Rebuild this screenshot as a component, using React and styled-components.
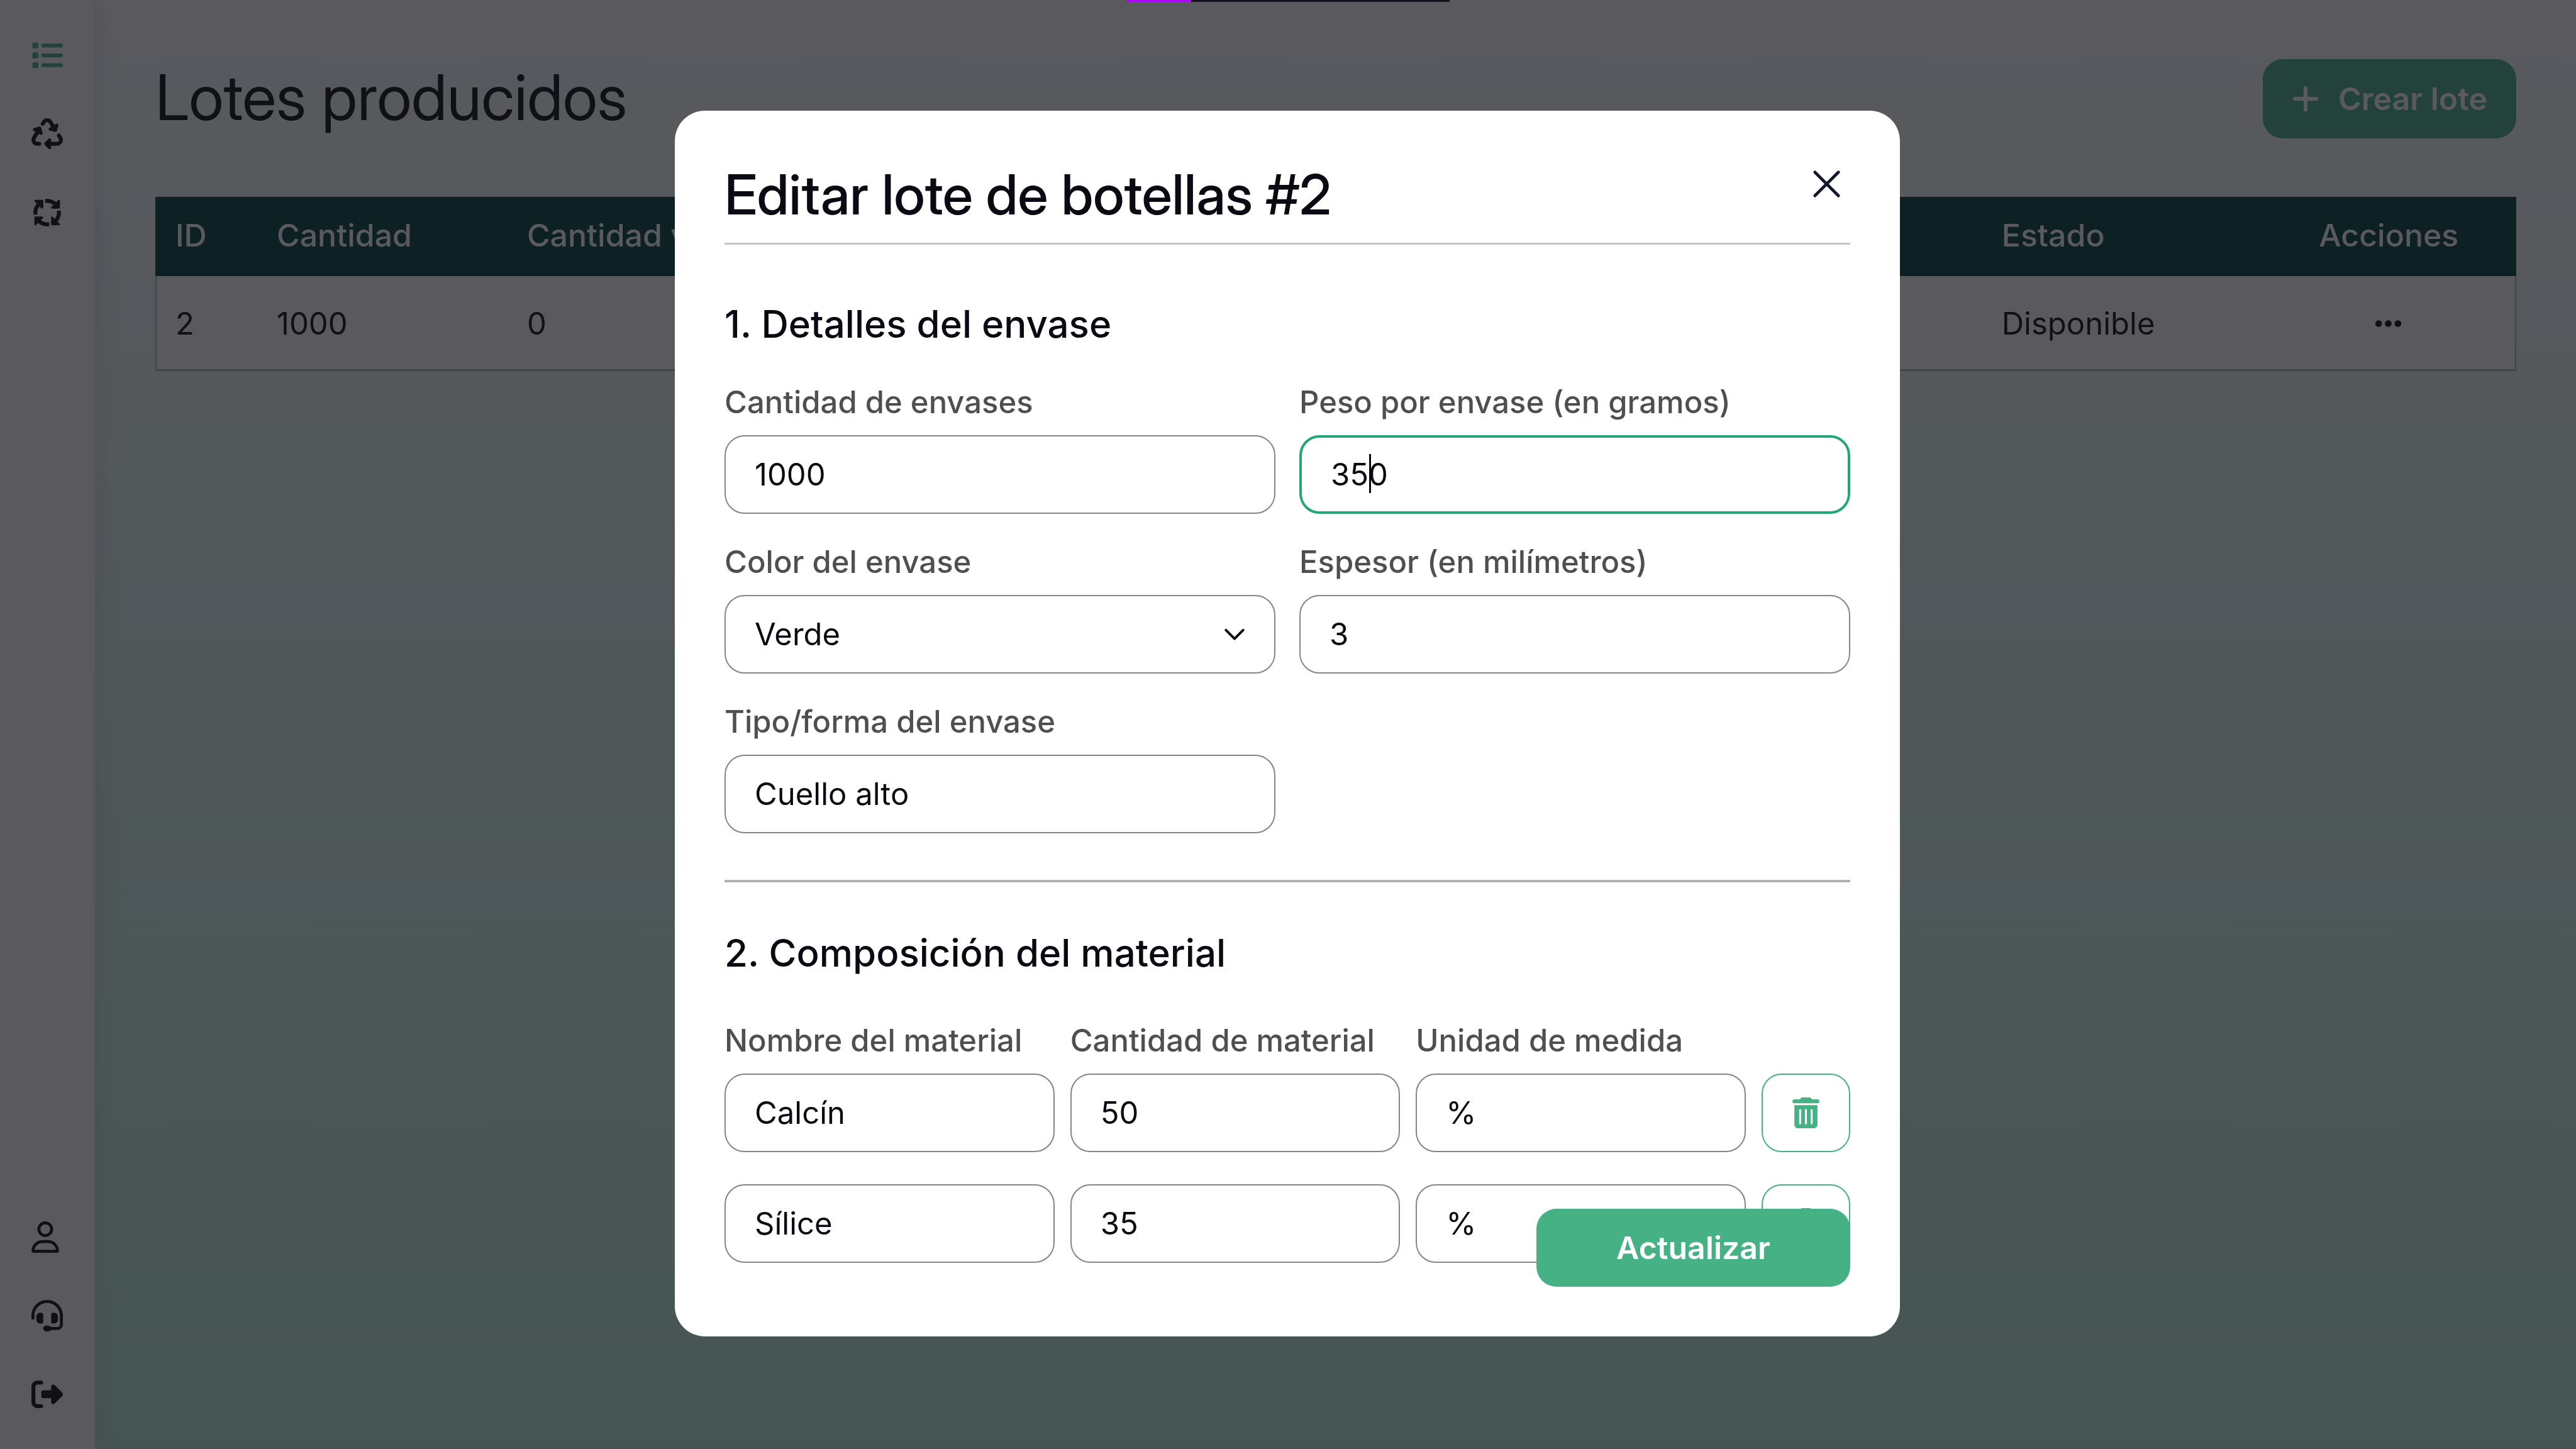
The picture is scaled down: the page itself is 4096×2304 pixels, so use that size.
import React from "react";
import styled, { createGlobalStyle } from "styled-components";
import {
  FaList,
  FaRecycle,
  FaArrowsSpin,
  FaRegUser,
  FaHeadset,
  FaRightFromBracket,
  FaTrashCan,
  FaPlus,
  FaEllipsis,
} from "react-icons/fa6";

const color = {
  ink: "#0b0a12",
  label: "#4f4f4f",
  green: "#47b186",
  focus: "#22a672",
  deep: "#02413b",
  line: "#858585",
  white: "#ffffff",
};

const displayFont = `"Inter Display", Inter, "Liberation Sans", sans-serif`;

const GlobalStyle = createGlobalStyle`
  *, *::before, *::after { box-sizing: border-box; }
  body {
    margin: 0;
    font-family: Inter, "Liberation Sans", sans-serif;
    font-size: 49px;
    line-height: 62px;
    color: ${color.ink};
  }
  button, input, select { font: inherit; color: inherit; margin: 0; }
  h1, h2, h3 { margin: 0; }
`;

const Page = styled.div`
  display: flex;
  min-height: 100vh;
  background: linear-gradient(180deg, #ffffff 0%, #c0f1dc 100%);
`;

const Sidebar = styled.nav`
  display: flex;
  flex-direction: column;
  justify-content: space-between;
  flex: none;
  width: 151px;
  padding: 63px 0 62px 50px;
  background: ${color.white};
  border-right: 2px solid #f6f6f8;
  box-shadow: 0 0 40px rgba(2, 65, 58, 0.12);
`;

const NavGroup = styled.div`
  display: flex;
  flex-direction: column;
  gap: 75px;
`;

const NavLink = styled.a`
  display: flex;
  color: ${(p) => (p.$active ? color.green : color.ink)};

  svg {
    flex: none;
    width: ${(p) => (p.$narrow ? "44px" : "50px")};
    height: 50px;
  }
`;

const Main = styled.main`
  flex: 1;
  min-width: 0;
  padding: 94px 95px 94px 96px;
`;

const PageHeader = styled.header`
  display: flex;
  align-items: center;
  justify-content: space-between;
  margin-bottom: 93px;
`;

const PageTitle = styled.h1`
  padding-bottom: 4px;
  font-family: ${displayFont};
  font-size: 100px;
  line-height: 112px;
  font-weight: 400;
`;

const Button = styled.button`
  display: flex;
  align-items: center;
  justify-content: center;
  gap: 30px;
  height: ${(p) => (p.$large ? "124px" : "126px")};
  width: ${(p) => (p.$large ? "499px" : "auto")};
  padding: 0 46px;
  border: 0;
  border-radius: 32px;
  background: ${color.green};
  color: ${color.white};
  font-size: 50px;
  font-weight: 600;

  svg {
    width: 44px;
    height: 50px;
  }
`;

const Table = styled.table`
  width: 100%;
  table-layout: fixed;
  border-spacing: 0;
`;

const HeadCell = styled.th`
  width: ${(p) => p.$width || "auto"};
  height: 126px;
  padding: 0 32px 4px;
  background: ${color.deep};
  color: ${color.white};
  font-size: 50px;
  font-weight: 500;
  text-align: ${(p) => (p.$center ? "center" : "left")};
  white-space: nowrap;
`;

const Cell = styled.td`
  height: 151px;
  padding: 3px 32px 0;
  background: ${color.white};
  border-bottom: 3px solid #b5b5b5;

  &:first-child { border-left: 2px solid #b5b5b5; padding-left: 30px; }
  &:last-child { border-right: 2px solid #b5b5b5; }
`;

const MoreButton = styled.button`
  display: flex;
  margin: 0 auto;
  padding: 0;
  border: 0;
  background: none;
`;

const Overlay = styled.div`
  position: fixed;
  inset: 0;
  display: flex;
  justify-content: center;
  align-items: center;
  padding: 0 2px 3px 0;
  background: rgba(19, 18, 25, 0.7);
`;

const Progress = styled.div`
  position: fixed;
  top: 0;
  left: 50%;
  display: flex;
  width: 514px;
  height: 3px;
  margin-left: -257px;
  background: #15101c;
`;

const ProgressValue = styled.div`
  width: 20%;
  background: #ae00ff;
`;

const Dialog = styled.form`
  position: relative;
  display: flex;
  flex-direction: column;
  width: 1948px;
  height: 1949px;
  max-width: 94vw;
  max-height: 94vh;
  padding: 79px;
  border-radius: 48px;
  background: ${color.white};
`;

const DialogHeader = styled.header`
  display: flex;
  flex: none;
  align-items: flex-start;
  justify-content: space-between;
  padding-bottom: 23px;
  border-bottom: 3px solid #c2c2c2;
`;

const DialogTitle = styled.h2`
  font-family: ${displayFont};
  font-size: 88px;
  line-height: 108px;
  font-weight: 500;
`;

const CloseButton = styled.button`
  display: flex;
  padding: 0;
  border: 0;
  background: none;
  color: #0f172a;

  svg { width: 75px; height: 75px; }
`;

const DialogBody = styled.div`
  flex: 1;
  min-height: 0;
  overflow: hidden;
`;

const Section = styled.section`
  padding: ${(p) => (p.$first ? "88px" : "74px")} 0 74px;
  border-bottom: ${(p) => (p.$first ? "4px solid #b2b2b2" : "0")};
`;

const SectionTitle = styled.h3`
  margin-bottom: ${(p) => (p.$wide ? "70px" : "55px")};
  font-size: 60px;
  line-height: 76px;
  font-weight: 500;
`;

const FieldGrid = styled.div`
  display: grid;
  grid-template-columns: 1fr 1fr;
  gap: 45px 38px;
`;

const MaterialGrid = styled.div`
  display: grid;
  grid-template-columns: 1fr 1fr 1fr 141px;
  align-items: end;
  gap: 51px 25px;
`;

const Field = styled.div`
  display: flex;
  flex-direction: column;
  gap: 20px;
  min-width: 0;
`;

const Label = styled.label`
  color: ${color.label};
  line-height: 64px;
  font-weight: 500;
  white-space: nowrap;
`;

const Control = styled.div`
  position: relative;
  display: grid;
`;

const Input = styled.input`
  width: 100%;
  height: 125px;
  padding: 0 46px;
  border: ${(p) => (p.$focused ? `4px solid ${color.focus}` : `2px solid ${color.line}`)};
  border-radius: 32px;
  outline: none;
  background: ${color.white};
`;

const Select = styled.select`
  width: 100%;
  height: 125px;
  padding: 0 46px;
  border: 2px solid ${color.line};
  border-radius: 32px;
  appearance: none;
  background: ${color.white};
`;

const Chevron = styled.svg`
  position: absolute;
  top: 50%;
  right: 44px;
  width: 42px;
  height: 42px;
  margin-top: -21px;
  pointer-events: none;
`;

const Caret = styled.span`
  position: absolute;
  top: 30px;
  left: 111px;
  width: 3px;
  height: 62px;
  background: ${color.ink};
`;

const DeleteButton = styled.button`
  display: flex;
  align-items: center;
  justify-content: center;
  height: 125px;
  padding: 0;
  border: 2px solid ${color.green};
  border-radius: 32px;
  background: ${color.white};
  color: ${color.green};
`;

const SubmitBar = styled.div`
  position: absolute;
  right: 79px;
  bottom: 79px;
`;

const mainLinks = [
  { name: "Lotes", icon: FaList, active: true },
  { name: "Reciclaje", icon: FaRecycle },
  { name: "Procesos", icon: FaArrowsSpin },
];

const accountLinks = [
  { name: "Perfil", icon: FaRegUser, narrow: true },
  { name: "Soporte", icon: FaHeadset },
  { name: "Salir", icon: FaRightFromBracket },
];

const materials = [
  { name: "Calcín", amount: "50", unit: "%" },
  { name: "Sílice", amount: "35", unit: "%" },
];

const materialFields = [
  { key: "name", label: "Nombre del material" },
  { key: "amount", label: "Cantidad de material" },
  { key: "unit", label: "Unidad de medida" },
];

function NavLinks({ links }) {
  return (
    <NavGroup>
      {links.map(({ name, icon: Icon, active, narrow }) => (
        <NavLink key={name} href="#" aria-label={name} $active={active} $narrow={narrow}>
          <Icon />
        </NavLink>
      ))}
    </NavGroup>
  );
}

function TextField({ id, label, value, focused }) {
  return (
    <Field>
      <Label htmlFor={id}>{label}</Label>
      <Control>
        <Input id={id} defaultValue={value} $focused={focused} />
        {focused && <Caret />}
      </Control>
    </Field>
  );
}

function LotsTable() {
  return (
    <Table>
      <thead>
        <tr>
          <HeadCell $width="4.29%">ID</HeadCell>
          <HeadCell $width="10.6%">Cantidad</HeadCell>
          <HeadCell>Cantidad vendida</HeadCell>
          <HeadCell $width="11.85%">Estado</HeadCell>
          <HeadCell $width="10.8%" $center>Acciones</HeadCell>
        </tr>
      </thead>
      <tbody>
        <tr>
          <Cell>2</Cell>
          <Cell>1000</Cell>
          <Cell>0</Cell>
          <Cell>Disponible</Cell>
          <Cell>
            <MoreButton type="button" aria-label="Más acciones">
              <FaEllipsis />
            </MoreButton>
          </Cell>
        </tr>
      </tbody>
    </Table>
  );
}

function EditDialog() {
  return (
    <Dialog role="dialog" aria-labelledby="dialog-title">
      <DialogHeader>
        <DialogTitle id="dialog-title">Editar lote de botellas #2</DialogTitle>
        <CloseButton type="button" aria-label="Cerrar">
          <svg viewBox="0 0 24 24" fill="none" stroke="currentColor" strokeWidth="1.5" strokeLinecap="round">
            <path d="M6 18 18 6M6 6l12 12" />
          </svg>
        </CloseButton>
      </DialogHeader>

      <DialogBody>
        <Section $first>
          <SectionTitle>1. Detalles del envase</SectionTitle>
          <FieldGrid>
            <TextField id="cantidad" label="Cantidad de envases" value="1000" />
            <TextField id="peso" label="Peso por envase (en gramos)" value="350" focused />
            <Field>
              <Label htmlFor="color">Color del envase</Label>
              <Control>
                <Select id="color" defaultValue="Verde">
                  <option>Verde</option>
                </Select>
                <Chevron viewBox="0 0 16 16" fill="none" stroke="currentColor" strokeWidth="1.5">
                  <path d="M2.8 5.3 8 10.500l5.200-5.200" strokeLinecap="round" strokeLinejoin="round" />
                </Chevron>
              </Control>
            </Field>
            <TextField id="espesor" label="Espesor (en milímetros)" value="3" />
            <TextField id="tipo" label="Tipo/forma del envase" value="Cuello alto" />
          </FieldGrid>
        </Section>

        <Section>
          <SectionTitle $wide>2. Composición del material</SectionTitle>
          <MaterialGrid>
            {materials.map((material, row) => (
              <React.Fragment key={material.name}>
                {materialFields.map(({ key, label }) =>
                  row === 0 ? (
                    <TextField key={key} id={`${key}-0`} label={label} value={material[key]} />
                  ) : (
                    <Input key={key} aria-label={label} defaultValue={material[key]} />
                  )
                )}
                <DeleteButton type="button" aria-label={`Eliminar ${material.name}`}>
                  <FaTrashCan />
                </DeleteButton>
              </React.Fragment>
            ))}
          </MaterialGrid>
        </Section>
      </DialogBody>

      <SubmitBar>
        <Button type="submit" $large>Actualizar</Button>
      </SubmitBar>
    </Dialog>
  );
}

export default function App() {
  return (
    <>
      <GlobalStyle />
      <Page>
        <Sidebar>
          <NavLinks links={mainLinks} />
          <NavLinks links={accountLinks} />
        </Sidebar>
        <Main>
          <PageHeader>
            <PageTitle>Lotes producidos</PageTitle>
            <Button type="button">
              <FaPlus />
              Crear lote
            </Button>
          </PageHeader>
          <LotsTable />
        </Main>
      </Page>
      <Overlay>
        <EditDialog />
      </Overlay>
      <Progress>
        <ProgressValue />
      </Progress>
    </>
  );
}
